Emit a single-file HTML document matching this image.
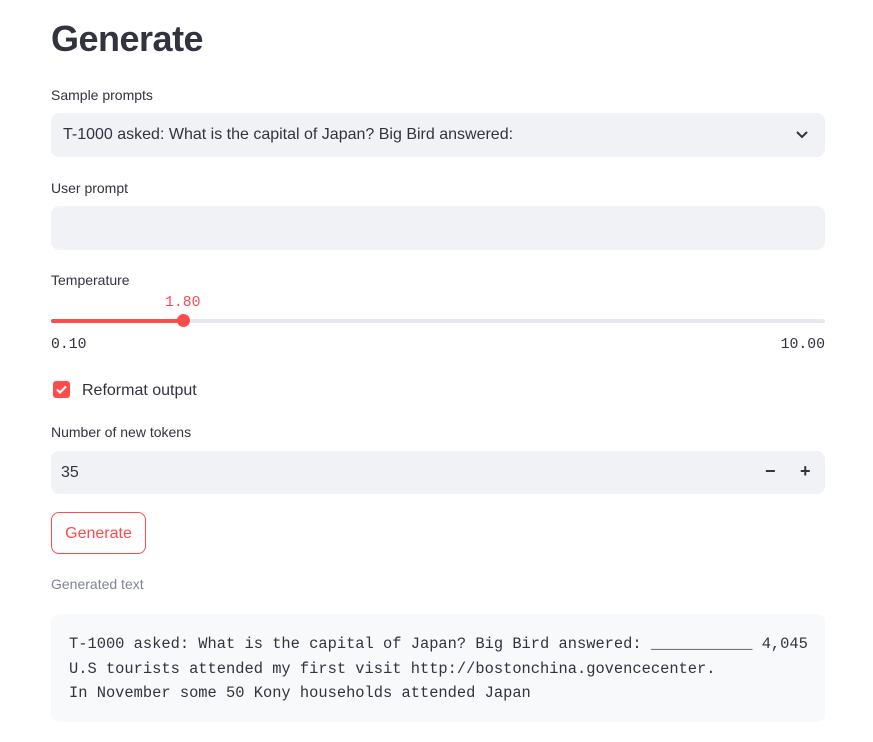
<!DOCTYPE html>
<html><head><style>
body{margin:0;background:#fff;font-family:"Liberation Sans",sans-serif;color:#31333f;width:873px;height:742px;overflow:hidden;position:relative}
.a{position:absolute}
h1{position:absolute;left:51px;top:18px;margin:0;font-size:36px;font-weight:700;letter-spacing:-0.5px}
.lbl{font-size:14px}
.box{background:#f0f2f6;border-radius:8px}
.mono{font-family:"Liberation Mono",monospace}
</style></head><body>
<h1>Generate</h1>
<div class="a lbl" style="left:51px;top:87px">Sample prompts</div>
<div class="a box" style="left:51px;top:113px;width:774px;height:44px"></div>
<div class="a" style="left:63px;top:126px;font-size:16px">T-1000 asked: What is the capital of Japan? Big Bird answered:</div>
<svg class="a" style="left:795px;top:129px" width="14" height="12" viewBox="0 0 14 12"><path d="M2 3l5 5 5-5" fill="none" stroke="#31333f" stroke-width="2"/></svg>
<div class="a lbl" style="left:51px;top:180px">User prompt</div>
<div class="a box" style="left:51px;top:206px;width:774px;height:44px"></div>
<div class="a lbl" style="left:51px;top:272px">Temperature</div>
<div class="a mono" style="left:165px;top:295px;font-size:14.8px;color:#ff4b4b">1.80</div>
<div class="a" style="left:51px;top:319px;width:774px;height:4px;background:#e6e8ee;border-radius:2px"></div>
<div class="a" style="left:51px;top:319px;width:133px;height:4px;background:#ff4b4b;border-radius:2px"></div>
<div class="a" style="left:177px;top:314px;width:13px;height:13px;border-radius:50%;background:#ff4b4b"></div>
<div class="a mono" style="left:51px;top:337px;font-size:14.8px">0.10</div>
<div class="a mono" style="right:48px;top:337px;font-size:14.8px">10.00</div>
<div class="a" style="left:53px;top:381px;width:17px;height:17px;background:#ff4b4b;border-radius:3px"></div>
<svg class="a" style="left:53px;top:381px" width="17" height="17" viewBox="0 0 17 17"><path d="M4 8.5l3 3 6-6" fill="none" stroke="#fff" stroke-width="2.2"/></svg>
<div class="a" style="left:82px;top:382px;font-size:16px">Reformat output</div>
<div class="a lbl" style="left:51px;top:424px">Number of new tokens</div>
<div class="a box" style="left:51px;top:451px;width:774px;height:43px"></div>
<div class="a" style="left:61px;top:464px;font-size:16px">35</div>
<div class="a" style="left:765px;top:461px;font-size:18px;font-weight:700">−</div>
<div class="a" style="left:800px;top:461px;font-size:18px;font-weight:700">+</div>
<div class="a" style="left:51px;top:512px;width:93px;height:40px;border:1px solid #ff4b4b;border-radius:8px;color:#ff4b4b;font-size:16px;text-align:center;line-height:41px">Generate</div>
<div class="a" style="left:51px;top:576px;font-size:14px;color:#808495">Generated text</div>
<div class="a" style="left:51px;top:614px;width:774px;height:108px;background:#f8f9fb;border-radius:8px"></div>
<div class="a mono" style="left:69px;top:632px;font-size:15.4px;line-height:24.5px;white-space:pre">T-1000 asked: What is the capital of Japan? Big Bird answered: ___________ 4,045
U.S tourists attended my first visit http://bostonchina.govencecenter.
In November some 50 Kony households attended Japan</div>
</body></html>
